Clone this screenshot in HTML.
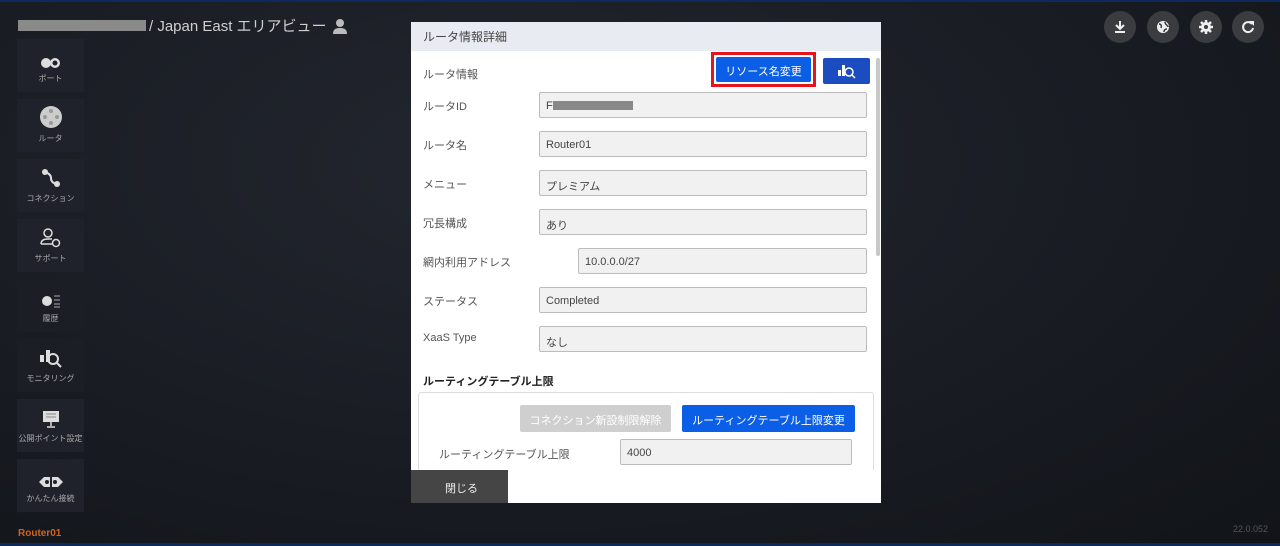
<!DOCTYPE html>
<html><head><meta charset="utf-8"><style>
*{box-sizing:border-box;margin:0;padding:0}
body{width:1280px;height:546px;overflow:hidden;background:radial-gradient(ellipse at 40% 30%,#23262e 0%,#191c23 55%,#111418 100%);font-family:"Liberation Sans","Noto Sans CJK JP",sans-serif;position:relative;color:#ccc}
.topline{position:absolute;left:0;top:0;width:1280px;height:2px;background:#0c2a5c}
.botline{position:absolute;left:0;bottom:0;width:1280px;height:3px;background:#0c2a5c}
.title{position:absolute;left:18px;top:15px;font-size:15px;color:#cfcfcf;display:flex;align-items:center}
.title .bar{width:128px;height:11px;background:#8a8a8a;margin-right:3px}
.tile{position:absolute;left:17px;width:67px;height:53px;background:#1f222a;text-align:center;font-size:8px;color:#aaa}
.tile .ic{height:32px;display:flex;align-items:flex-end;justify-content:center;padding-bottom:3px}
.tile .tx{margin-top:2px}
.router{position:absolute;left:18px;top:528px;font-size:10px;color:#d0621c;font-weight:bold}
.ver{position:absolute;right:12px;top:524px;font-size:9px;color:#555}
.rb{position:absolute;top:11px;width:32px;height:32px;border-radius:50%;background:#3a3c40}
.rb svg{position:absolute;left:8px;top:8px}
.modal{position:absolute;left:411px;top:22px;width:470px;height:481px;background:#fff}
.mh{height:29px;background:#e8ebf2;font-size:12px;color:#444;padding:6px 0 0 12px}
.lbl{position:absolute;left:12px;font-size:11px;color:#555}
.inp{position:absolute;left:128px;width:328px;height:26px;background:#f1f1f1;border:1px solid #bcbcbc;border-radius:2px;font-size:11px;color:#444;padding:7px 0 0 6px}
.btnb{position:absolute;background:#0b5fe6;color:#fff;font-size:11px;text-align:center;border-radius:2px}
.scroll{position:absolute;left:465px;top:36px;width:4px;height:198px;background:#c8c8c8;border-radius:2px}
</style></head><body>
<div class="topline"></div><div class="botline"></div>
<div class="title"><div class="bar"></div>/ Japan East エリアビュー <svg width="16" height="16" viewBox="0 0 16 16" style="margin-left:5px"><circle cx="8" cy="5" r="4" fill="#bbb"/><path d="M1 16c0-5 3-6 7-6s7 1 7 6z" fill="#bbb"/></svg></div>

<div class="tile" style="top:39px"><div class="ic"><svg width="20" height="10"><circle cx="5" cy="5" r="5" fill="#ddd"/><circle cx="14" cy="5" r="5" fill="#ddd"/><circle cx="14" cy="5" r="2.5" fill="#1f222a"/></svg></div><div class="tx">ポート</div></div>
<div class="tile" style="top:99px"><div class="ic"><svg width="22" height="22"><circle cx="11" cy="11" r="11" fill="#ccc"/><circle cx="11" cy="5" r="2" fill="#999"/><circle cx="11" cy="17" r="2" fill="#999"/><circle cx="5" cy="11" r="2" fill="#999"/><circle cx="17" cy="11" r="2" fill="#999"/></svg></div><div class="tx">ルータ</div></div>
<div class="tile" style="top:159px"><div class="ic"><svg width="20" height="20"><path d="M4 4 Q10 6 10 10 Q10 15 16 16" stroke="#ddd" stroke-width="2" fill="none"/><circle cx="4" cy="4" r="3" fill="#ddd"/><circle cx="16" cy="16" r="3" fill="#ddd"/></svg></div><div class="tx">コネクション</div></div>
<div class="tile" style="top:219px"><div class="ic"><svg width="22" height="20"><circle cx="8" cy="5" r="4" stroke="#ddd" stroke-width="1.5" fill="none"/><path d="M1 16c0-4 3-5 7-5h4" stroke="#ddd" stroke-width="1.5" fill="none"/><path d="M1 16h12" stroke="#ddd" stroke-width="1.5"/><circle cx="16" cy="15" r="3.5" stroke="#ddd" stroke-width="1.5" fill="none"/></svg></div><div class="tx">サポート</div></div>
<div class="tile" style="top:279px;background:#1b1e25"><div class="ic"><svg width="20" height="14"><circle cx="6" cy="7" r="5" fill="#ddd"/><path d="M13 2h6M13 6h6M13 10h6M13 13h6" stroke="#aaa" stroke-width="1"/></svg></div><div class="tx">履歴</div></div>
<div class="tile" style="top:339px;background:#1b1e25"><div class="ic"><svg width="24" height="22"><rect x="1" y="9" width="4" height="7" fill="#ddd"/><rect x="7" y="4" width="4" height="12" fill="#ddd"/><circle cx="14" cy="13" r="5" stroke="#ddd" stroke-width="2" fill="none"/><path d="M18 17l4 4" stroke="#ddd" stroke-width="2"/></svg></div><div class="tx">モニタリング</div></div>
<div class="tile" style="top:399px"><div class="ic"><svg width="18" height="18"><rect x="1" y="1" width="16" height="11" fill="#ddd"/><path d="M4 4h10M4 7h10" stroke="#888"/><path d="M9 12v4M5 17h8" stroke="#ddd" stroke-width="1.5"/></svg></div><div class="tx">公開ポイント設定</div></div>
<div class="tile" style="top:459px"><div class="ic"><svg width="26" height="12"><path d="M1 6l5-5h6v10H6z" fill="#ddd"/><path d="M25 6l-5-5h-6v10h6z" fill="#ddd"/><circle cx="9" cy="6" r="2" fill="#1f222a"/><circle cx="17" cy="6" r="2" fill="#1f222a"/></svg></div><div class="tx">かんたん接続</div></div>
<div class="router">Router01</div>
<div class="ver">22.0.052</div>

<div class="rb" style="left:1104px"><svg width="16" height="16"><path d="M8 2v8M4 6l4 4 4-4" stroke="#eee" stroke-width="2" fill="none"/><path d="M3 13h10" stroke="#eee" stroke-width="2"/></svg></div>
<div class="rb" style="left:1147px"><svg width="16" height="16"><circle cx="8" cy="8" r="6" fill="#eee"/><path d="M4 5c2 0 3 2 2 4M10 3c0 3 3 3 3 5M9 13c0-2 1-3 3-3" stroke="#3a3c40" stroke-width="1.5" fill="none"/></svg></div>
<div class="rb" style="left:1190px"><svg width="16" height="16"><circle cx="8" cy="8" r="5" fill="#eee"/><circle cx="8" cy="8" r="2" fill="#3a3c40"/><path d="M8 1v3M8 12v3M1 8h3M12 8h3M3 3l2 2M11 11l2 2M3 13l2-2M11 5l2-2" stroke="#eee" stroke-width="2.5"/></svg></div>
<div class="rb" style="left:1232px"><svg width="16" height="16"><path d="M12 5A5 5 0 1 0 13 9" stroke="#eee" stroke-width="2" fill="none"/><path d="M9 2h5v5z" fill="#eee"/></svg></div>

<div class="modal">
<div class="mh">ルータ情報詳細</div>
<div class="lbl" style="top:44px">ルータ情報</div>
<div style="position:absolute;left:300px;top:30px;width:105px;height:35px;border:3px solid #e8141c"></div>
<div class="btnb" style="left:305px;top:35px;width:95px;height:25px;padding-top:6px">リソース名変更</div>
<div class="btnb" style="left:412px;top:36px;width:47px;height:26px;background:#1c4dc0"><svg width="20" height="18" style="margin-top:4px"><rect x="1" y="8" width="3" height="6" fill="#fff"/><rect x="5" y="3" width="3" height="11" fill="#fff"/><circle cx="12" cy="10" r="4" stroke="#fff" stroke-width="1.5" fill="none"/><path d="M15 13l3 3" stroke="#fff" stroke-width="1.5"/></svg></div>
<div class="scroll"></div>

<div class="lbl" style="top:76px">ルータID</div><div class="inp" style="top:70px">F<span style="display:inline-block;width:80px;height:9px;background:#888;vertical-align:-1px"></span></div>
<div class="lbl" style="top:115px">ルータ名</div><div class="inp" style="top:109px">Router01</div>
<div class="lbl" style="top:154px">メニュー</div><div class="inp" style="top:148px">プレミアム</div>
<div class="lbl" style="top:193px">冗長構成</div><div class="inp" style="top:187px">あり</div>
<div class="lbl" style="top:232px">網内利用アドレス</div><div class="inp" style="top:226px;left:167px;width:289px">10.0.0.0/27</div>
<div class="lbl" style="top:271px">ステータス</div><div class="inp" style="top:265px">Completed</div>
<div class="lbl" style="top:310px">XaaS Type</div><div class="inp" style="top:304px">なし</div>

<div class="lbl" style="top:351px;font-weight:bold;color:#222">ルーティングテーブル上限</div>
<div style="position:absolute;left:7px;top:370px;width:456px;height:80px;border:1px solid #ddd;border-bottom:none;border-radius:3px"></div>
<div class="btnb" style="left:109px;top:383px;width:151px;height:27px;padding-top:7px;background:#cfcfcf">コネクション新設制限解除</div>
<div class="btnb" style="left:271px;top:383px;width:173px;height:27px;padding-top:7px">ルーティングテーブル上限変更</div>
<div class="lbl" style="left:28px;top:424px">ルーティングテーブル上限</div>
<div class="inp" style="left:209px;top:417px;width:232px">4000</div>
<div style="position:absolute;left:0;top:448px;width:470px;height:33px;background:#fff"></div>
<div style="position:absolute;left:0;top:448px;width:97px;height:33px;background:#454545;color:#eee;font-size:11px;padding:10px 0 0 34px">閉じる</div>
</div>
</body></html>
